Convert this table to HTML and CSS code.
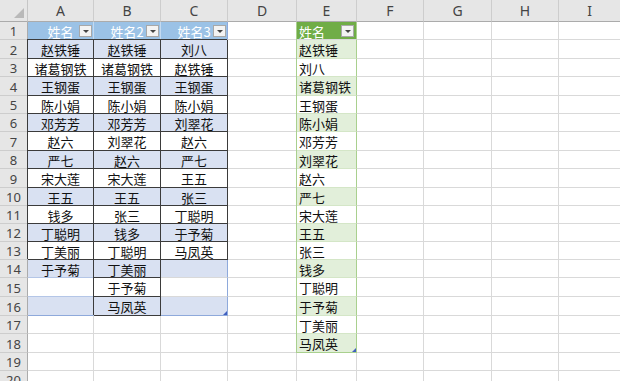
FILE: index.html
```html
<!DOCTYPE html>
<html lang="zh-CN">
<head>
<meta charset="utf-8">
<title>Sheet</title>
<link rel="stylesheet" href="styles.css">
</head>
<body>
<div class="sheet">
  <div class="corner"><span class="tri"></span></div>
  <div class="ch">A</div><div class="ch">B</div><div class="ch">C</div><div class="ch">D</div><div class="ch">E</div><div class="ch">F</div><div class="ch">G</div><div class="ch">H</div><div class="ch last">I</div>

  <div class="rh">1</div>
  <div class="c bh"><span class="t">姓名</span><span class="dd"></span></div>
  <div class="c bh"><span class="t">姓名2</span><span class="dd"></span></div>
  <div class="c bh bo-r"><span class="t">姓名3</span><span class="dd"></span></div>
  <div class="c"></div>
  <div class="c gh"><span>姓名</span><span class="dd"></span></div>
  <div class="c"></div><div class="c"></div><div class="c"></div><div class="c last"></div>

  <div class="rh">2</div>
  <div class="c ctr b1 bd">赵铁锤</div><div class="c ctr b1 bd">赵铁锤</div><div class="c ctr b1 bd">刘八</div>
  <div class="c"></div><div class="c ge g1">赵铁锤</div>
  <div class="c"></div><div class="c"></div><div class="c"></div><div class="c last"></div>

  <div class="rh">3</div>
  <div class="c ctr bd">诸葛钢铁</div><div class="c ctr bd">诸葛钢铁</div><div class="c ctr bd">赵铁锤</div>
  <div class="c"></div><div class="c ge">刘八</div>
  <div class="c"></div><div class="c"></div><div class="c"></div><div class="c last"></div>

  <div class="rh">4</div>
  <div class="c ctr b1 bd">王钢蛋</div><div class="c ctr b1 bd">王钢蛋</div><div class="c ctr b1 bd">王钢蛋</div>
  <div class="c"></div><div class="c ge g1">诸葛钢铁</div>
  <div class="c"></div><div class="c"></div><div class="c"></div><div class="c last"></div>

  <div class="rh">5</div>
  <div class="c ctr bd">陈小娟</div><div class="c ctr bd">陈小娟</div><div class="c ctr bd">陈小娟</div>
  <div class="c"></div><div class="c ge">王钢蛋</div>
  <div class="c"></div><div class="c"></div><div class="c"></div><div class="c last"></div>

  <div class="rh">6</div>
  <div class="c ctr b1 bd">邓芳芳</div><div class="c ctr b1 bd">邓芳芳</div><div class="c ctr b1 bd">刘翠花</div>
  <div class="c"></div><div class="c ge g1">陈小娟</div>
  <div class="c"></div><div class="c"></div><div class="c"></div><div class="c last"></div>

  <div class="rh">7</div>
  <div class="c ctr bd">赵六</div><div class="c ctr bd">刘翠花</div><div class="c ctr bd">赵六</div>
  <div class="c"></div><div class="c ge">邓芳芳</div>
  <div class="c"></div><div class="c"></div><div class="c"></div><div class="c last"></div>

  <div class="rh">8</div>
  <div class="c ctr b1 bd">严七</div><div class="c ctr b1 bd">赵六</div><div class="c ctr b1 bd">严七</div>
  <div class="c"></div><div class="c ge g1">刘翠花</div>
  <div class="c"></div><div class="c"></div><div class="c"></div><div class="c last"></div>

  <div class="rh">9</div>
  <div class="c ctr bd">宋大莲</div><div class="c ctr bd">宋大莲</div><div class="c ctr bd">王五</div>
  <div class="c"></div><div class="c ge">赵六</div>
  <div class="c"></div><div class="c"></div><div class="c"></div><div class="c last"></div>

  <div class="rh">10</div>
  <div class="c ctr b1 bd">王五</div><div class="c ctr b1 bd">王五</div><div class="c ctr b1 bd">张三</div>
  <div class="c"></div><div class="c ge g1">严七</div>
  <div class="c"></div><div class="c"></div><div class="c"></div><div class="c last"></div>

  <div class="rh">11</div>
  <div class="c ctr bd">钱多</div><div class="c ctr bd">张三</div><div class="c ctr bd">丁聪明</div>
  <div class="c"></div><div class="c ge">宋大莲</div>
  <div class="c"></div><div class="c"></div><div class="c"></div><div class="c last"></div>

  <div class="rh">12</div>
  <div class="c ctr b1 bd">丁聪明</div><div class="c ctr b1 bd">钱多</div><div class="c ctr b1 bd">于予菊</div>
  <div class="c"></div><div class="c ge g1">王五</div>
  <div class="c"></div><div class="c"></div><div class="c"></div><div class="c last"></div>

  <div class="rh">13</div>
  <div class="c ctr bd">丁美丽</div><div class="c ctr bd">丁聪明</div><div class="c ctr bd">马凤英</div>
  <div class="c"></div><div class="c ge">张三</div>
  <div class="c"></div><div class="c"></div><div class="c"></div><div class="c last"></div>

  <div class="rh">14</div>
  <div class="c ctr b1 tb">于予菊</div><div class="c ctr b1 bd">丁美丽</div><div class="c ctr b1 bo-r"></div>
  <div class="c"></div><div class="c ge g1">钱多</div>
  <div class="c"></div><div class="c"></div><div class="c"></div><div class="c last"></div>

  <div class="rh">15</div>
  <div class="c ctr tb"></div><div class="c ctr bd">于予菊</div><div class="c ctr bo-r"></div>
  <div class="c"></div><div class="c ge">丁聪明</div>
  <div class="c"></div><div class="c"></div><div class="c"></div><div class="c last"></div>

  <div class="rh">16</div>
  <div class="c ctr b1 bo-b"></div><div class="c ctr b1 bd">马凤英</div><div class="c ctr b1 bo-r bo-b rz"></div>
  <div class="c"></div><div class="c ge g1">于予菊</div>
  <div class="c"></div><div class="c"></div><div class="c"></div><div class="c last"></div>

  <div class="rh">17</div>
  <div class="c"></div><div class="c"></div><div class="c"></div>
  <div class="c"></div><div class="c ge">丁美丽</div>
  <div class="c"></div><div class="c"></div><div class="c"></div><div class="c last"></div>

  <div class="rh">18</div>
  <div class="c"></div><div class="c"></div><div class="c"></div>
  <div class="c"></div><div class="c ge g1 ge-end rz">马凤英</div>
  <div class="c"></div><div class="c"></div><div class="c"></div><div class="c last"></div>

  <div class="rh">19</div>
  <div class="c"></div><div class="c"></div><div class="c"></div>
  <div class="c"></div><div class="c"></div>
  <div class="c"></div><div class="c"></div><div class="c"></div><div class="c last"></div>

  <div class="rh">20</div>
  <div class="c"></div><div class="c"></div><div class="c"></div>
  <div class="c"></div><div class="c"></div>
  <div class="c"></div><div class="c"></div><div class="c"></div><div class="c last"></div>
</div>
</body>
</html>
```
FILE: styles.css
```css
html, body {
  margin: 0;
  padding: 0;
  background: #ffffff;
  overflow: hidden;
}

.sheet {
  width: 620px;
  height: 381px;
  overflow: hidden;
  display: grid;
  grid-template-columns: 28px 66px 67px 67px 69px 60px 67px 68px 67px 1fr;
  grid-template-rows: 22px 18px 19px 18px 19px 18px 18px 19px 18px 19px 18px 18px 18px 18px 18px 19px 19px 18px 19px 18px 18px;
  font-family: "Noto Sans CJK SC", "Noto Sans", sans-serif;
  font-size: 13px;
  color: #111;
}

.sheet > div {
  box-sizing: border-box;
  min-width: 0;
  white-space: nowrap;
  overflow: hidden;
}

/* column / row headers */
.corner {
  background: #e6e6e6;
  border-right: 1px solid #c6c6c6;
  border-bottom: 1px solid #ababab;
  display: flex;
  align-items: flex-end;
  justify-content: flex-end;
  padding: 0 3px 3px 0;
}

.tri {
  display: block;
  width: 10px;
  height: 10px;
  background: #b9b9b9;
  clip-path: polygon(100% 0, 100% 100%, 0 100%);
}

.ch {
  background: #e6e6e6;
  border-right: 1px solid #cdcdcd;
  border-bottom: 1px solid #ababab;
  color: #444;
  font-family: "Noto Sans", "Open Sans", sans-serif;
  font-size: 14px;
  display: flex;
  align-items: center;
  justify-content: center;
}

.rh {
  background: #e6e6e6;
  border-right: 1px solid #ababab;
  border-bottom: 1px solid #cdcdcd;
  color: #444;
  font-family: "Noto Sans", "Open Sans", sans-serif;
  font-size: 13px;
  display: flex;
  align-items: center;
  justify-content: center;
  padding-top: 1px;
}

/* cells */
.c {
  border-right: 1px solid #d9d9d9;
  border-bottom: 1px solid #d9d9d9;
  display: flex;
  align-items: center;
  line-height: 1;
  padding-top: 1px;
}

.last {
  border-right: none;
}

.ctr {
  justify-content: center;
}

/* blue table */
.bh {
  background: #9bc2e6;
  color: #ffffff;
  border-right-color: #c4daf0;
  display: grid;
  grid-template-areas: "a";
  align-items: center;
}

.bh > * {
  grid-area: a;
}

.bh .t {
  justify-self: center;
}

.bh .dd {
  justify-self: end;
  margin-right: 1px;
}

.b1 {
  background: #d9e1f2;
}

.bd {
  border-right: 1px solid #3b3b3b;
  border-bottom: 1px solid #3b3b3b;
  box-shadow: -1px -1px 0 0 #3b3b3b;
}

.tb {
  border-bottom-color: #b4c6e7;
}

.bo-r {
  border-right: 1px solid #8ea9db;
}

.bo-b {
  border-bottom: 1px solid #8ea9db;
}

/* dropdown button */
.dd {
  display: flex;
  align-items: center;
  justify-content: center;
  width: 13px;
  height: 12px;
  box-sizing: border-box;
  background: #f3f3f3;
  border: 1px solid #a8a8a8;
}

.dd::after {
  content: "";
  display: block;
  width: 0;
  height: 0;
  border-left: 3px solid transparent;
  border-right: 3px solid transparent;
  border-top: 3px solid #444;
}

/* green table */
.gh {
  background: #70ad47;
  color: #ffffff;
  justify-content: space-between;
  padding-left: 2px;
  padding-right: 2px;
  border-right: 1px solid #a9d08e;
  box-shadow: -1px 0 0 0 #a9d08e;
}

.ge {
  padding-left: 2px;
  border-right: 1px solid #a9d08e;
  border-bottom: 1px solid #d4e6c7;
  box-shadow: -1px 0 0 0 #a9d08e;
}

.g1 {
  background: #e2efda;
}

.ge-end {
  border-bottom: 1px solid #a9d08e;
}

/* resize handle */
.rz {
  position: relative;
}

.rz::after {
  content: "";
  position: absolute;
  right: 0;
  bottom: 0;
  width: 4px;
  height: 4px;
  background: #3f5fbf;
  clip-path: polygon(100% 0, 100% 100%, 0 100%);
}
```
